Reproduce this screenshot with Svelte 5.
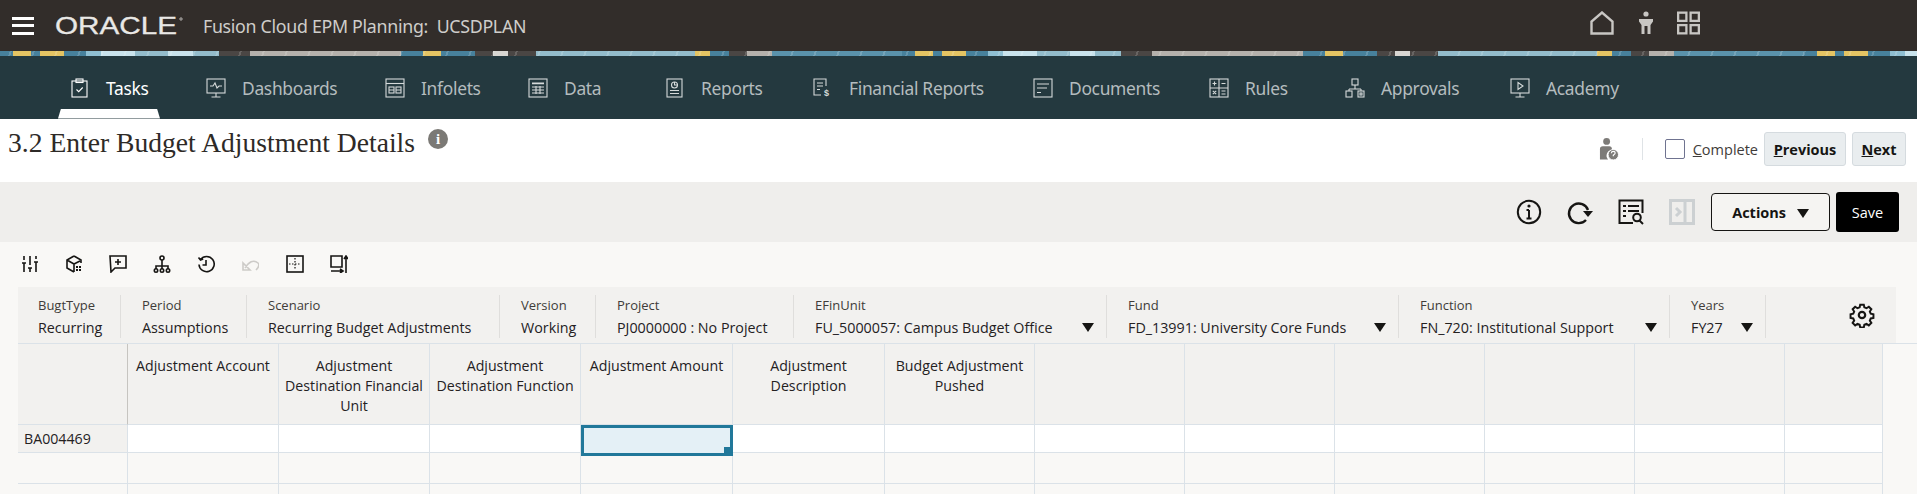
<script>
	const navItems = [
		{ label: 'Tasks', icon: 'tasks', width: 136, active: true },
		{ label: 'Dashboards', icon: 'dashboards', width: 179 },
		{ label: 'Infolets', icon: 'infolets', width: 143 },
		{ label: 'Data', icon: 'data', width: 137 },
		{ label: 'Reports', icon: 'reports', width: 148 },
		{ label: 'Financial Reports', icon: 'financial', width: 220 },
		{ label: 'Documents', icon: 'documents', width: 176 },
		{ label: 'Rules', icon: 'rules', width: 136 },
		{ label: 'Approvals', icon: 'approvals', width: 165 },
		{ label: 'Academy', icon: 'academy', width: 120 }
	]

	const navIcons = {
		tasks: '<rect x="2" y="3" width="15" height="16"/><rect x="6" y="1" width="7" height="3.5"/><path d="M6.5 11.5l2.2 2.2 4-4.2"/>',
		dashboards: '<rect x="1" y="1" width="18" height="14"/><path d="M4 8h3l2-3 2 5 2-2h3M10 15v4M5.500 19h9"/>',
		infolets: '<rect x="1" y="1" width="18" height="18"/><path d="M1 5.500h18"/><rect x="4" y="9" width="5" height="6"/><rect x="11" y="9" width="5" height="6"/><path d="M11 12h5M4 12h5"/>',
		data: '<rect x="1" y="1" width="18" height="18"/><path d="M4 5h12M4 5.800h12M4 9h12M4 12h12M4 15h12M8 8v8M12 8v8"/>',
		reports: '<rect x="2" y="1" width="15" height="18"/><circle cx="9.500" cy="7" r="3"/><path d="M9.500 4v3h3M5 12.500h9M5 15.500h9"/>',
		financial: '<path d="M13 8V1H1v16h7M4 5h6M4 8h6M4 11.500h3"/><text x="11" y="18" class="dollar">$</text>',
		documents: '<rect x="1" y="1" width="18" height="18"/><path d="M4 6h12M4 10h10M4 14.500h4"/>',
		rules: '<rect x="1" y="1" width="18" height="18"/><path d="M10 1v18M1 10h18M3.500 5.500h4M5.500 3.500v4M12.500 5.500h4M3.800 12.800l3.400 3.400M7.200 12.800l-3.400 3.400M12.500 13h4M12.500 16h4"/>',
		approvals: '<rect x="7" y="1" width="6" height="6"/><path d="M10 7v4M4 11h12M4 11v2M16 11v2"/><rect x="1" y="13" width="6" height="6"/><rect x="13" y="13" width="6" height="6"/><rect x="15" y="15" width="2" height="2"/>',
		academy: '<rect x="1" y="1" width="18" height="14"/><path d="M8 4.500l5 3.500-5 3.500zM10 15v4M5.500 19h9"/>'
	}

	const toolIcons = [
		{ name: 'settings', body: '<path d="M3 1v4M3 8v9M9 1v9M9 13v4M15 1v3M15 7v10M1 8h4M7 13h4M13 7h4"/>' },
		{ name: 'cube', body: '<path d="M9 1l7 4v3M9 1L2 5v8l7 4M2 5l7 4v8M9 9l6-3"/><path class="dots" d="M11 11h2v2h-2zM14 11h2v2h-2zM11 14h2v2h-2zM14 14h2v2h-2z"/>' },
		{ name: 'comment', body: '<path d="M1 1h16v12H6l-4 4zM9 4v6M6 7h6"/>' },
		{ name: 'hierarchy', body: '<circle cx="9" cy="3" r="2"/><path d="M9 5v6M3 14v-3h12v3M9 11v3"/><circle cx="3" cy="15.500" r="1.700"/><circle cx="9" cy="15.500" r="1.700"/><circle cx="15" cy="15.500" r="1.700"/>' },
		{ name: 'history', body: '<path d="M3.500 4.500A7.600 7.600 0 1 1 2 9.500M1.500 2.500l2 2.500 2.700-1M9 5v5H5.500"/>' },
		{ name: 'undo', muted: true, body: '<path d="M2 15V8l7 7zM4 13C8 7 12 4 17 8c2 2 0 5-2 7"/>' },
		{ name: 'split', body: '<rect x="1" y="1" width="16" height="16"/><path class="dash" d="M9 3v12M3 9h12"/>' },
		{ name: 'rows', body: '<path d="M1 1h11v11H1zM1 16h12M10 14l3 2-3 2M16 1v17M14 4l2-3 2 3"/>' }
	]

	const pov = [
		{ label: 'BugtType', value: 'Recurring', width: 103 },
		{ label: 'Period', value: 'Assumptions', width: 126 },
		{ label: 'Scenario', value: 'Recurring Budget Adjustments', width: 253 },
		{ label: 'Version', value: 'Working', width: 96 },
		{ label: 'Project', value: 'PJ0000000 : No Project', width: 198 },
		{ label: 'EFinUnit', value: 'FU_5000057: Campus Budget Office', width: 313, caret: true },
		{ label: 'Fund', value: 'FD_13991: University Core Funds', width: 292, caret: true },
		{ label: 'Function', value: 'FN_720: Institutional Support', width: 271, caret: true },
		{ label: 'Years', value: 'FY27', width: 96, caret: true }
	]

	const headers = [
		'Adjustment Account',
		'Adjustment Destination Financial Unit',
		'Adjustment Destination Function',
		'Adjustment Amount',
		'Adjustment Description',
		'Budget Adjustment Pushed',
		'', '', '', '', '', ''
	]
</script>

<div class="page">
	<header class="topbar">
		<div class="hamburger"><span></span><span></span><span></span></div>
		<svg class="logo" width="130" height="24" viewBox="0 0 130 24" aria-label="Oracle">
			<text x="0" y="20" transform="scale(1.236 1)">ORACLE</text>
			<circle cx="126" cy="5" r="1.200" />
		</svg>
		<span class="app-name">Fusion Cloud EPM Planning:&nbsp; UCSDPLAN</span>
		<div class="top-icons">
			<svg width="24" height="24" viewBox="0 0 24 24"><path d="M1.500 22.500V10.500L12 1.500l10.500 9v12z" /></svg>
			<svg class="person" width="16" height="24" viewBox="0 0 16 24">
				<circle cx="8" cy="3" r="2.600" />
				<path d="M1 8h14v2.500l-2.500 3.500v9H9.500v-8h-3v8h-3v-9L1 10.500z" />
			</svg>
			<svg width="23" height="24" viewBox="0 0 24 24">
				<rect x="1.200" y="1.200" width="8.600" height="8.600" />
				<rect x="14.200" y="1.200" width="8.600" height="8.600" />
				<rect x="1.200" y="14.200" width="8.600" height="8.600" />
				<rect x="14.200" y="14.200" width="8.600" height="8.600" />
			</svg>
		</div>
	</header>

	<div class="strip"></div>

	<nav class="nav">
		{#each navItems as item}
			<div class="nav-item" class:active={item.active} style:width="{item.width}px">
				<svg class="nav-icon" width="20" height="20" viewBox="0 0 20 20">{@html navIcons[item.icon]}</svg>
				<span>{item.label}</span>
				{#if item.active}<i class="tab"></i>{/if}
			</div>
		{/each}
	</nav>

	<section class="title-row">
		<h1>3.2 Enter Budget Adjustment Details</h1>
		<span class="title-info">i</span>
		<div class="title-actions">
			<svg class="assignee" width="20" height="24" viewBox="0 0 21 24">
				<circle cx="8" cy="4" r="3.600" />
				<path d="M1 23V12q0-3 3-3h7q2 0 2.500 2v2a6 6 0 0 0-4 10z" />
				<circle cx="15" cy="18" r="5.500" class="help" />
				<path d="M13 16.500q0-2 2-2t2 1.800q0 1-2 2.200v1" class="help-mark" />
			</svg>
			<span class="divider"></span>
			<span class="checkbox"></span>
			<span class="complete"><u>C</u>omplete</span>
			<button class="step prev"><u>P</u>revious</button>
			<button class="step next"><u>N</u>ext</button>
		</div>
	</section>

	<section class="form-bar">
		<svg class="act" width="26" height="26" viewBox="0 0 26 26">
			<circle cx="13" cy="13" r="11.200" />
			<path d="M13 11v8M10.500 19.500h5M10.500 11h2.500" />
			<circle class="solid" cx="13" cy="7" r="1.600" />
		</svg>
		<svg class="act" width="26" height="26" viewBox="0 0 26 26">
			<path class="thick" d="M21 11A9.800 9.800 0 1 0 19 21" />
			<path class="solid" d="M16 12h10l-5 6z" />
		</svg>
		<svg class="act" width="26" height="26" viewBox="0 0 26 26">
			<path d="M15 24H1.500V1.500h23V14M5 7h3M10 7h11M5 12h3M10 12h11M5 17h3" />
			<circle cx="19" cy="18.500" r="3.800" />
			<path d="M21.500 21.500l3.500 3.500" />
		</svg>
		<svg class="act off" width="26" height="26" viewBox="0 0 26 26">
			<rect x="1.500" y="1.500" width="23" height="23" />
			<path d="M16 1.500v23M7 9l4 4-4 4" />
		</svg>
		<button class="actions">Actions <i class="caret"></i></button>
		<button class="save">Save</button>
	</section>

	<main class="content">
		<div class="tools">
			{#each toolIcons as tool}
				<svg class="tool" class:muted={tool.muted} width="18" height="18" viewBox="0 0 18 18" aria-label={tool.name}>{@html tool.body}</svg>
			{/each}
		</div>

		<div class="pov">
			{#each pov as item}
				<div class="pov-item" style:width="{item.width}px">
					<span class="pov-label">{item.label}</span>
					<span class="pov-value">
						{item.value}
						{#if item.caret}<i class="caret"></i>{/if}
					</span>
				</div>
			{/each}
			<svg class="gear" width="26" height="26" viewBox="0 0 26 26">
				<path d="M11 1.500h4l.6 3 2.400 1 2.600-1.700 2.800 2.800-1.700 2.600 1 2.400 3 .6v4l-3 .6-1 2.400 1.700 2.600-2.800 2.800-2.600-1.700-2.400 1-.6 3h-4l-.6-3-2.400-1-2.600 1.700-2.800-2.800 1.700-2.600-1-2.400-3-.6v-4l3-.6 1-2.400-1.700-2.600 2.800-2.800 2.600 1.700 2.400-1z" transform="translate(1.300 1.300) scale(.9)" />
				<circle cx="13" cy="13" r="3.200" />
			</svg>
		</div>

		<div class="grid">
			<div class="cell head corner"></div>
			{#each headers as text}
				<div class="cell head">{text}</div>
			{/each}

			<div class="cell rowhead">BA004469</div>
			{#each headers as _, i}
				<div class="cell body" class:selected={i === 3}></div>
			{/each}

			{#each [0, 1] as r}
				<div class="cell empty"></div>
				{#each headers as _}
					<div class="cell empty"></div>
				{/each}
			{/each}
		</div>
	</main>
</div>

<style>
	:global(body) {
		margin: 0;
		background: #f9f8f6;
	}

	.page {
		height: 494px;
		overflow: hidden;
		font-family: "Open Sans", "Noto Sans", sans-serif;
		color: #161513;
	}

	/* Top bar */
	.topbar {
		display: flex;
		align-items: center;
		height: 51px;
		padding-left: 12px;
		background: #322d2a;
		color: #fff;
	}

	.hamburger {
		display: flex;
		flex-direction: column;
		gap: 4.500px;
		width: 22px;
	}

	.hamburger span {
		height: 3px;
		background: #fff;
	}

	.logo {
		flex: none;
		margin-left: 21px;
		overflow: visible;
	}

	.logo text {
		font-family: "Liberation Sans", sans-serif;
		font-size: 24px;
		fill: #e9e8e6;
		stroke: #e9e8e6;
		stroke-width: 0.300;
	}

	.logo circle {
		fill: none;
		stroke: #e9e8e6;
		stroke-width: 0.700;
	}

	.app-name {
		margin-left: 18px;
		font-family: "Noto Sans", sans-serif;
		font-size: 17.800px;
		letter-spacing: -0.300px;
		color: #cfcdca;
	}

	.top-icons {
		position: absolute;
		left: 1590px;
		top: 11px;
		display: flex;
		align-items: center;
		gap: 23.500px;
	}

	.top-icons svg {
		fill: none;
		stroke: #c8c6c3;
		stroke-width: 2.400;
	}

	.top-icons .person {
		fill: #c8c6c3;
		stroke: none;
	}

	/* Pattern strip: the repeating banner, cut down to 5px */
	.strip {
		height: 5px;
		background-size: 23px 5px, 902px 5px;
		background-image:
			linear-gradient(115deg, transparent 0 40%, rgba(255, 255, 255, 0.16) 40% 48%, transparent 48% 100%),
			linear-gradient(
				90deg,
				#47819c 0 13px, #e4c463 13px 31px, #47819c 31px 40px, #e4c463 40px 64px,
				#47819c 64px 86px, #8fbfd2 86px 101px, #c9e3ec 101px 135px, #93bccb 135px 168px,
				#c9e3ec 168px 193px, #93bccb 193px 219px, #4a4644 219px 250px, #b5b1ac 250px 401px,
				#47819c 401px 423px, #e4c463 423px 441px, #47819c 441px 475px, #4a4644 475px 493px,
				#d8d6d2 493px 508px, #4a4644 508px 536px, #93bccb 536px 695px, #e4c463 695px 710px,
				#47819c 710px 729px, #4a4644 729px 747px, #b5b1ac 747px 772px, #5a92ab 772px 902px
			);
	}

	/* Main nav */
	.nav {
		display: flex;
		align-items: center;
		height: 63px;
		padding-left: 70px;
		background: #24393f;
		font-family: "Noto Sans", sans-serif;
		font-size: 17.400px;
		letter-spacing: -0.300px;
		color: #b4bcbe;
	}

	.nav-item {
		position: relative;
		display: flex;
		flex: none;
		align-items: center;
		gap: 16px;
	}

	.nav-item.active {
		color: #fff;
	}

	.nav-icon {
		flex: none;
		fill: none;
		stroke: #d5dada;
		stroke-width: 1.100;
	}

	.nav-item.active .nav-icon {
		stroke: #fff;
	}

	:global(.nav-icon .dollar) {
		font-family: "Liberation Sans", sans-serif;
		font-size: 9px;
		font-weight: 700;
		fill: #d5dada;
		stroke: none;
	}

	.tab {
		position: absolute;
		left: -12px;
		top: 33px;
		width: 102px;
		height: 10px;
		background: #fff;
		clip-path: polygon(3px 0, 99px 0, 102px 100%, 0 100%);
	}

	/* Title row */
	.title-row {
		display: flex;
		height: 63px;
		background: #fff;
	}

	h1 {
		margin: 7px 0 0 8px;
		font-family: "Liberation Serif", serif;
		font-size: 27.600px;
		font-weight: 400;
		line-height: 34px;
		color: #2e2a27;
	}

	.title-info {
		width: 20px;
		height: 20px;
		margin: 10px 0 0 13px;
		border-radius: 50%;
		background: #7b7975;
		color: #fff;
		font-family: "Liberation Serif", serif;
		font-size: 15px;
		font-weight: 700;
		line-height: 20px;
		text-align: center;
	}

	.title-actions {
		display: flex;
		align-items: center;
		height: 34px;
		margin: 13px 11px 0 auto;
	}

	.assignee {
		fill: #7d7b78;
	}

	.assignee .help {
		stroke: #fff;
		stroke-width: 1;
	}

	.assignee .help-mark {
		fill: none;
		stroke: #fff;
		stroke-width: 1.200;
	}

	.divider {
		width: 1px;
		height: 22px;
		margin: 0 22px 0 23px;
		background: #dfe3e6;
	}

	.checkbox {
		box-sizing: border-box;
		width: 20px;
		height: 20px;
		border: 1.500px solid #6f7390;
		border-radius: 2px;
		background: #fff;
	}

	.complete {
		margin: 0 6px 0 8px;
		font-size: 14.500px;
		color: #3f3c39;
	}

	.step {
		box-sizing: border-box;
		height: 34px;
		padding: 0;
		border: 1px solid #d5dbdf;
		border-radius: 3px;
		background: #e9edef;
		color: #161513;
		font-family: inherit;
		font-size: 14.500px;
		font-weight: 700;
	}

	.prev {
		width: 82px;
		margin-right: 6px;
	}

	.next {
		width: 54px;
	}

	/* Form bar */
	.form-bar {
		display: flex;
		align-items: center;
		justify-content: flex-end;
		gap: 25px;
		height: 60px;
		padding-right: 18px;
		background: #efeeec;
	}

	.act {
		fill: none;
		stroke: #161513;
		stroke-width: 2;
	}

	.act .thick {
		stroke-width: 2.400;
	}

	.act .solid {
		fill: #161513;
		stroke: none;
	}

	.act.off {
		stroke: #ccd0d2;
		stroke-width: 3;
	}

	.actions {
		box-sizing: border-box;
		width: 119px;
		height: 38px;
		margin-left: -9px;
		border: 1px solid #161513;
		border-radius: 4px;
		background: #f5f4f2;
		color: #161513;
		font-family: inherit;
		font-size: 14.500px;
		font-weight: 700;
	}

	.actions .caret {
		margin-left: 7px;
	}

	.save {
		width: 63px;
		height: 40px;
		margin-left: -19px;
		border: 0;
		border-radius: 3px;
		background: #000;
		color: #fff;
		font-family: inherit;
		font-size: 14.500px;
	}

	.caret {
		display: inline-block;
		width: 0;
		height: 0;
		border-left: 6.500px solid transparent;
		border-right: 6.500px solid transparent;
		border-top: 9px solid #161513;
	}

	/* Toolbar and POV */
	.tools {
		display: flex;
		align-items: flex-start;
		gap: 26.200px;
		height: 32px;
		padding: 13px 0 0 20.500px;
	}

	.tool {
		flex: none;
		fill: none;
		stroke: #161513;
		stroke-width: 1.600;
	}

	.tool.muted {
		stroke: #cdcbc8;
	}

	:global(.tool .dots) {
		fill: #161513;
		stroke: none;
	}

	:global(.tool .dash) {
		stroke-width: 1.200;
		stroke-dasharray: 1.500 1.500;
	}

	.pov {
		position: relative;
		display: flex;
		box-sizing: border-box;
		width: 1878px;
		height: 56px;
		margin-left: 18px;
		padding-top: 8px;
		background: #f2f1ef;
	}

	.pov-item {
		display: flex;
		flex: none;
		flex-direction: column;
		gap: 2px;
		box-sizing: border-box;
		height: 43px;
		padding-left: 21px;
		border-right: 1px solid #dfdedc;
	}

	.pov-item:first-child {
		padding-left: 20px;
	}

	.pov-label {
		font-size: 13px;
		line-height: 20px;
		color: #403c39;
	}

	.pov-value {
		display: flex;
		align-items: center;
		justify-content: space-between;
		padding-right: 12px;
		font-size: 14.300px;
		line-height: 21px;
		white-space: nowrap;
		color: #24211f;
	}

	.gear {
		position: absolute;
		left: 1831px;
		top: 15px;
		fill: none;
		stroke: #161513;
		stroke-width: 2.200;
	}

	/* Grid */
	.grid {
		display: grid;
		grid-template-columns: 110px 151px 151px 151px 152px 152px 150px repeat(5, 150px) 98px;
		grid-template-rows: 81px 28px 31px 31px;
		margin-left: 18px;
		border-top: 1px solid #dbe2e8;
		font-size: 14.200px;
		line-height: 20px;
	}

	.cell {
		box-sizing: border-box;
		border-right: 1px solid #dbe2e8;
		border-bottom: 1px solid #dbe2e8;
	}

	.head {
		padding: 12px 6px 0;
		background: #f2f1ef;
		text-align: center;
		color: #24211f;
	}

	.corner {
		border-right-color: #c6c4c0;
	}

	.rowhead {
		padding-left: 6px;
		background: #f2f1ef;
		line-height: 27px;
		color: #24211f;
	}

	.body {
		background: #fff;
	}

	.selected {
		position: relative;
		z-index: 1;
		height: 31px;
		border: 3px solid #21789a;
		background: #e4f0f6;
	}

	.selected::after {
		content: "";
		position: absolute;
		right: -3px;
		bottom: -3px;
		width: 9px;
		height: 9px;
		background: #21789a;
	}

	.empty {
		background: #f9f8f6;
	}
</style>
